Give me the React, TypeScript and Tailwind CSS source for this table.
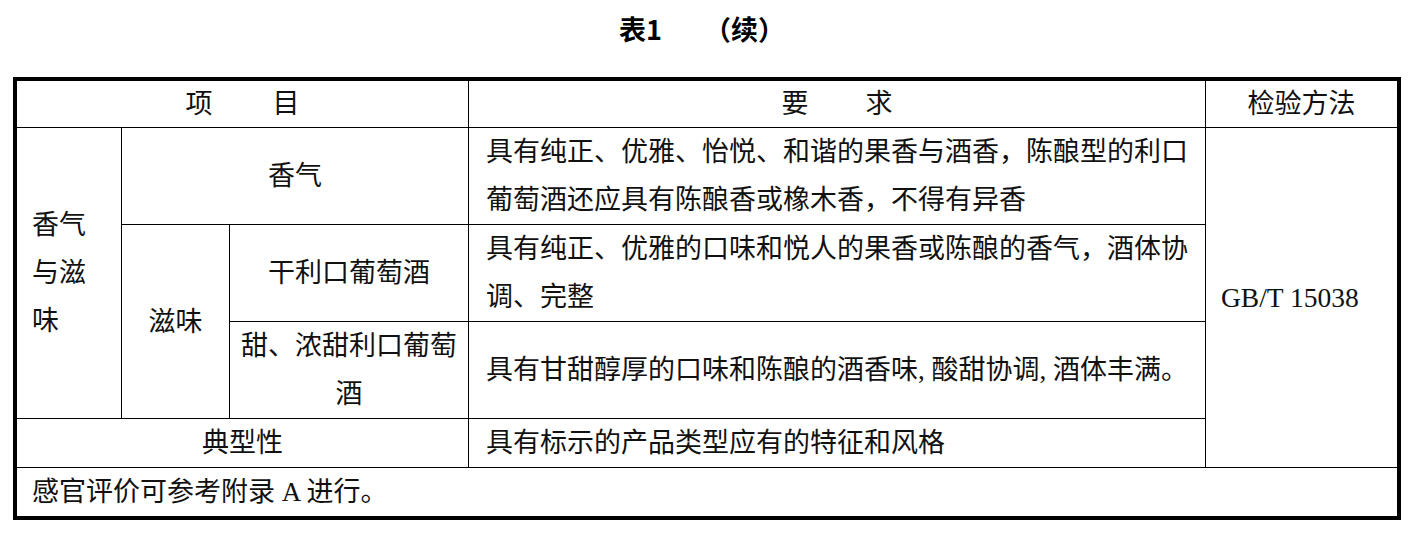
import React from "react";

const body = { fontFamily: '"Liberation Serif", "Noto Sans CJK SC", serif' };

function Cell({ className = "", children }: { className?: string; children?: React.ReactNode }) {
  return <div className={"bg-white text-[27px] leading-[48px] text-[#111] whitespace-nowrap flex items-center " + className}>{children}</div>;
}

function Comma() {
  return <span className="inline-block w-[13.5px]">,</span>;
}

export default function App() {
  return (
    <div className="w-[1414px] h-[533px] bg-white" style={body}>
      <div className="h-[77px] pt-[12px] flex justify-center pr-[10px]">
        <div className="flex items-center h-[34px] text-[27px] font-bold text-black" style={{ fontFamily: '"Noto Sans CJK SC", sans-serif' }}>
          <span>表1</span>
          <span className="ml-[42px]">（续）</span>
        </div>
      </div>
      <div className="ml-[13px] w-[1388px] border-4 border-black bg-black">
        <div className="grid gap-px grid-cols-[104px_107px_238px_736px_191px] grid-rows-[46px_96px_96px_96px_48px_48px]">
          {/* header */}
          <Cell className="col-span-3 justify-center gap-[60px]"><span>项</span><span>目</span></Cell>
          <Cell className="justify-center gap-[57px]"><span>要</span><span>求</span></Cell>
          <Cell className="justify-center">检验方法</Cell>

          {/* row 2 */}
          <Cell className="row-span-3 pl-[15px]">
            <div>香气<br />与滋<br />味</div>
          </Cell>
          <Cell className="col-span-2 justify-center">香气</Cell>
          <Cell className="pl-[17px]">
            <div>具有纯正、优雅、怡悦、和谐的果香与酒香，陈酿型的利口<br />葡萄酒还应具有陈酿香或橡木香，不得有异香</div>
          </Cell>
          <Cell className="row-span-4 pl-[15px]">
            <span className="text-[27.5px]">GB/T 15038</span>
          </Cell>

          {/* row 3 */}
          <Cell className="row-span-2 justify-center">滋味</Cell>
          <Cell className="justify-center">干利口葡萄酒</Cell>
          <Cell className="pl-[17px]">
            <div>具有纯正、优雅的口味和悦人的果香或陈酿的香气，酒体协<br />调、完整</div>
          </Cell>

          {/* row 4 */}
          <Cell className="justify-center text-center leading-[47px]">
            <div>甜、浓甜利口葡萄<br />酒</div>
          </Cell>
          <Cell className="pl-[17px]">
            <span>具有甘甜醇厚的口味和陈酿的酒香味<Comma />酸甜协调<Comma />酒体丰满。</span>
          </Cell>

          {/* row 5 */}
          <Cell className="col-span-3 justify-center">典型性</Cell>
          <Cell className="pl-[17px]">具有标示的产品类型应有的特征和风格</Cell>

          {/* footer */}
          <Cell className="col-span-5 pl-[15px]">感官评价可参考附录 A 进行。</Cell>
        </div>
      </div>
    </div>
  );
}
